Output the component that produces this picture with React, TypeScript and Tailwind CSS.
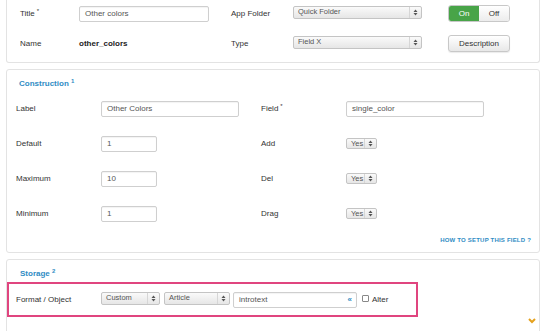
import { FC, ReactNode } from "react";

const font = { fontFamily: '"Liberation Sans", Arial, sans-serif' };

const Arrows: FC = () => (
  <svg width="5" height="7" viewBox="0 0 5 7" className="shrink-0">
    <path d="M2.5 0.5 L4.5 3 H0.5 Z M2.5 6.5 L4.5 4 H0.5 Z" fill="#555" />
  </svg>
);

interface SelectProps {
  value: string;
  w: string;
  small?: boolean;
}

const Select: FC<SelectProps> = ({ value, w, small }) => (
  <div
    className={`${w} ${small ? "h-[11px]" : "h-[13px]"} flex items-center justify-between rounded-[2px] border border-[#c4c4c4] bg-gradient-to-b from-[#fafafa] to-[#e6e6e6] pl-[4px] pr-[3px] text-[7.5px] text-[#555]`}
  >
    <span>{value}</span>
    <span className="flex h-full items-center border-l border-[#d6d6d6] pl-[3px]">
      <Arrows />
    </span>
  </div>
);

const Input: FC<{ value: string; w: string; children?: ReactNode }> = ({ value, w, children }) => (
  <div
    className={`${w} flex h-[16px] items-center justify-between rounded-[2px] border border-[#cfcfcf] bg-white pl-[5px] pr-[4px] text-[8px] text-[#555] shadow-[inset_0_1px_1px_rgba(0,0,0,0.05)]`}
  >
    <span>{value}</span>
    {children}
  </div>
);

const Req: FC = () => <sup className="ml-[2px] text-[6px] text-[#333]">*</sup>;

const Row: FC<{ label: ReactNode; value: ReactNode; label2: ReactNode; value2: ReactNode }> = ({
  label,
  value,
  label2,
  value2,
}) => (
  <div className="flex h-[35px] items-center">
    <span className="w-[85px] shrink-0 text-[8px] text-[#333]">{label}</span>
    <div className="w-[160px] shrink-0">{value}</div>
    <span className="w-[85px] shrink-0 text-[8px] text-[#333]">{label2}</span>
    <div>{value2}</div>
  </div>
);

export default function App() {
  return (
    <div style={font} className="h-[331px] w-[546px] overflow-hidden bg-white px-[6px]">
      {/* top panel */}
      <div className="h-[63px] rounded-b-[3px] border border-t-0 border-[#e3e3e3] bg-white pl-[13px]">
        <div className="flex h-[27px] items-center">
          <span className="w-[59px] shrink-0 text-[8px] text-[#333]">
            Title<Req />
          </span>
          <div className="w-[152px] shrink-0">
            <Input value="Other colors" w="w-[130px]" />
          </div>
          <span className="w-[62px] shrink-0 text-[8px] text-[#333]">App Folder</span>
          <div className="-mt-[3px] w-[155px] shrink-0">
            <Select value="Quick Folder" w="w-[129px]" />
          </div>
          <div className="flex h-[17px] w-[62px] overflow-hidden rounded-[3px] border border-[#c8c8c8] text-[8px]">
            <span className="flex w-1/2 items-center justify-center bg-[#48a448] text-white">On</span>
            <span className="flex w-1/2 items-center justify-center bg-gradient-to-b from-white to-[#ececec] text-[#333]">
              Off
            </span>
          </div>
        </div>
        <div className="mt-[3px] flex h-[27px] items-center">
          <span className="w-[59px] shrink-0 text-[8px] text-[#333]">Name</span>
          <span className="w-[152px] shrink-0 text-[8px] font-bold text-[#222]">other_colors</span>
          <span className="w-[62px] shrink-0 text-[8px] text-[#333]">Type</span>
          <div className="-mt-[3px] w-[155px] shrink-0">
            <Select value="Field X" w="w-[129px]" />
          </div>
          <div className="flex h-[17px] w-[62px] items-center justify-center rounded-[3px] border border-[#c8c8c8] bg-gradient-to-b from-white to-[#e8e8e8] text-[8px] text-[#333] shadow-[0_1px_1px_rgba(0,0,0,0.08)]">
            Description
          </div>
        </div>
      </div>

      {/* construction */}
      <div className="mt-[6px] h-[184px] rounded-[3px] border border-[#e3e3e3] bg-white pl-[9px] pr-[8px]">
        <div className="flex h-[21px] items-center pl-[3px] pt-[6px] text-[8px] font-bold text-[#2f8cc4]">
          <span>
            Construction <sup className="text-[6px]">1</sup>
          </span>
        </div>
        <Row
          label="Label"
          value={<Input value="Other Colors" w="w-[138px]" />}
          label2={
            <>
              Field<Req />
            </>
          }
          value2={<Input value="single_color" w="w-[138px]" />}
        />
        <Row
          label="Default"
          value={<Input value="1" w="w-[56px]" />}
          label2="Add"
          value2={<Select value="Yes" w="w-[31px]" small />}
        />
        <Row
          label="Maximum"
          value={<Input value="10" w="w-[56px]" />}
          label2="Del"
          value2={<Select value="Yes" w="w-[31px]" small />}
        />
        <Row
          label="Minimum"
          value={<Input value="1" w="w-[56px]" />}
          label2="Drag"
          value2={<Select value="Yes" w="w-[31px]" small />}
        />
        <div className="mt-[5px] text-right text-[6px] font-bold tracking-[0.2px] text-[#2f8cc4]">
          HOW TO SETUP THIS FIELD ?
        </div>
      </div>

      {/* storage */}
      <div className="relative mt-[6px] h-[90px] rounded-[3px] border border-[#e3e3e3] bg-white">
        <div className="flex h-[22px] items-center pl-[13px] pt-[6px] text-[8px] font-bold text-[#2f8cc4]">
          <span>
            Storage <sup className="text-[6px]">2</sup>
          </span>
        </div>
        <div className="flex h-[35px] w-[411px] items-center border-2 border-[#e0457f] pl-[7px]">
          <span className="w-[85px] shrink-0 text-[8px] text-[#333]">Format / Object</span>
          <div className="-mt-[3px] flex gap-[4px]">
            <Select value="Custom" w="w-[59px]" />
            <Select value="Article" w="w-[66px]" />
          </div>
          <div className="ml-[3px]">
            <Input value="introtext" w="w-[124px]">
              <span className="text-[8px] font-bold text-[#2f8cc4]">«</span>
            </Input>
          </div>
          <span className="mb-[3px] ml-[5px] h-[7px] w-[7px] rounded-[1px] border border-[#888] bg-white" />
          <span className="ml-[3px] text-[8px] text-[#333]">Alter</span>
        </div>
        <svg width="8" height="6" viewBox="0 0 8 6" className="absolute left-[521px] top-[58px]">
          <path d="M1 1 L4 4 L7 1" stroke="#e5a11d" strokeWidth="2" fill="none" />
        </svg>
      </div>
    </div>
  );
}
